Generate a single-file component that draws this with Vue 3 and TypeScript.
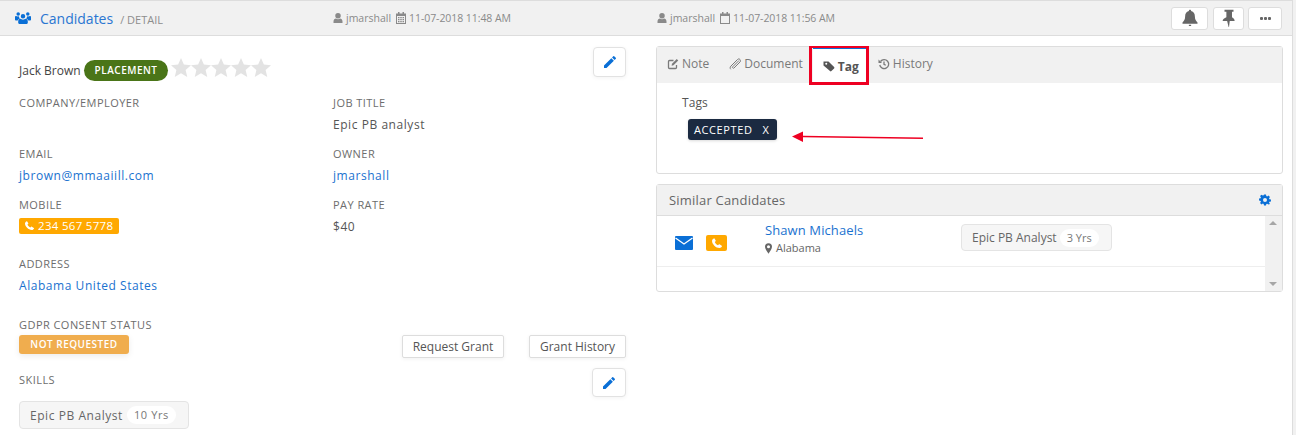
<script setup lang="ts">
interface Field { label: string; value?: string; kind?: string }
const leftFields: Field[][] = [
  [{ label: 'COMPANY/EMPLOYER' }, { label: 'JOB TITLE', value: 'Epic PB analyst' }],
  [{ label: 'EMAIL', value: 'jbrown@mmaaiill.com', kind: 'link' }, { label: 'OWNER', value: 'jmarshall', kind: 'link' }],
]
const stars = [1, 2, 3, 4, 5]
const pencil = 'M3 17.2V21h3.8L17.8 10 14 6.2 3 17.2zM20.7 7.1a1 1 0 0 0 0-1.4l-2.4-2.4a1 1 0 0 0-1.4 0l-1.8 1.8 3.8 3.8 1.8-1.8z'
const phone = 'M6.6 2.5 9.4 7c.3.5.2 1-.2 1.4L7.6 10c.9 2.6 3.8 5.5 6.4 6.4l1.6-1.6c.4-.4.9-.5 1.4-.2l4.500 2.800c.5.3.6.800.4 1.300-.8 2-2.700 3.300-4.800 3.300C9.700 21.900 2.100 14.300 2.100 7.900c0-2.100 1.300-4 3.300-4.800.5-.2.900-.9 1.200-.6z'
const user = 'M12 2a5.500 5.500 0 1 1 0 11 5.500 5.500 0 0 1 0-11zM3 22v-3c0-3.500 2.500-6 5-6 1 .8 2.500 1.300 4 1.300s3-.5 4-1.300c2.500 0 5 2.500 5 6v3z'
</script>

<template>
  <div class="page">
    <header class="topbar">
      <div class="title">
        <svg class="ic-users" viewBox="0 0 30 24"><path d="M15 5.500a4.200 4.200 0 1 1 0 8.400 4.200 4.200 0 0 1 0-8.400zM6 2a3.300 3.300 0 1 1 0 6.600A3.300 3.300 0 0 1 6 2zM24 2a3.300 3.300 0 1 1 0 6.600A3.300 3.300 0 0 1 24 2zM0 11c0-1.500 1-2 2-2 1 .8 2.500 1.200 5 .8.200 1.800 1 3.200 2.300 4.200-2 .5-3.600 2-4.300 3.500H2c-1 0-2-.5-2-1.500zM30 11c0-1.500-1-2-2-2-1 .8-2.500 1.200-5 .8-.2 1.800-1 3.200-2.300 4.200 2 .5 3.600 2 4.300 3.500h3c1 0 2-.5 2-1.500zM10 14.500c1.300 1 3 1.500 5 1.500s3.700-.5 5-1.500c2.500 0 4 2 4 5V22c0 1-1 2-2 2H8c-1 0-2-1-2-2v-2.500c0-3 1.500-5 4-5z" /></svg>
        <span class="title-main">Candidates</span>
        <span class="title-sub">/ DETAIL</span>
      </div>
      <div class="stamp stamp-a">
        <svg class="ic-meta" viewBox="0 0 24 24"><path :d="user" /></svg>
        <span>jmarshall</span>
        <svg class="ic-meta ic-cal" viewBox="0 0 24 24"><path fill-rule="evenodd" d="M6 0h3v3h6V0h3v3h4v21H2V3h4zM4 8v14h16V8zM6 10h3v2.500H6zM10.500 10h3v2.500h-3zM15 10h3v2.500h-3zM6 14h3v2.500H6zM10.500 14h3v2.500h-3zM15 14h3v2.500h-3zM6 18h3v2.500H6zM10.500 18h3v2.500h-3zM15 18h3v2.500h-3z" /></svg>
        <span class="date">11-07-2018 11:48 AM</span>
      </div>
      <div class="stamp stamp-b">
        <svg class="ic-meta" viewBox="0 0 24 24"><path :d="user" /></svg>
        <span>jmarshall</span>
        <svg class="ic-meta ic-cal" viewBox="0 0 24 24"><path fill-rule="evenodd" d="M6 0h3v3h6V0h3v3h4v21H2V3h4zM4 8v14h16V8z" /></svg>
        <span class="date">11-07-2018 11:56 AM</span>
      </div>
      <div class="top-actions">
        <button class="tbtn tbtn-bell"><svg viewBox="0 0 24 24"><path d="M12 1c1 0 1.500.7 1.500 1.500C17 3.200 18.500 6 18.500 10c0 4 1.500 6 3.500 8v1.500H2V18c2-2 3.500-4 3.500-8 0-4 1.500-6.800 5-7.500C10.500 1.700 11 1 12 1zM10.500 21h3v1.500h-3z" /></svg></button>
        <button class="tbtn tbtn-pin"><svg viewBox="0 0 24 24"><path d="M6 1h12v2.500h-2V11c2 1 3.500 2.500 3.500 5h-6.500l-1 8h-.5l-2-8H3.500c0-2.500 2.500-4 5-5V3.500H6z" /></svg></button>
        <button class="tbtn tbtn-more"><i></i><i></i><i></i></button>
      </div>
    </header>

    <main class="body">
      <section class="left">
        <div class="name-row">
          <span class="name">Jack Brown</span>
          <span class="pill">PLACEMENT</span>
          <span class="stars">
            <svg v-for="s in stars" :key="s" viewBox="0.5 1 23 23"><path d="M12 1l3.300 7.600 8.200.8-6.200 5.400 1.900 8.100-7.200-4.300-7.200 4.300 1.900-8.100L.5 9.400l8.200-.8z" /></svg>
          </span>
          <button class="edit edit-top"><svg viewBox="0 0 24 24"><path :d="pencil" /></svg></button>
        </div>

        <div v-for="(row, i) in leftFields" :key="i" class="row row-51">
          <div v-for="f in row" :key="f.label" class="field">
            <div class="label">{{ f.label }}</div>
            <div v-if="f.value" class="value" :class="{ link: f.kind === 'link' }">{{ f.value }}</div>
          </div>
        </div>

        <div class="row row-59">
          <div class="field">
            <div class="label">MOBILE</div>
            <div class="value"><span class="phone-tag"><svg viewBox="0 0 24 24"><path :d="phone" /></svg>234 567 5778</span></div>
          </div>
          <div class="field">
            <div class="label">PAY RATE</div>
            <div class="value">$40</div>
          </div>
        </div>

        <div class="row row-55">
          <div class="field">
            <div class="label">ADDRESS</div>
            <div class="value link">Alabama United States</div>
          </div>
        </div>

        <div class="gdpr">
          <div>
            <div class="label">GDPR CONSENT STATUS</div>
            <span class="gdpr-tag">NOT REQUESTED</span>
          </div>
          <div class="gdpr-btns">
            <button class="plain">Request Grant</button>
            <button class="plain">Grant History</button>
          </div>
        </div>

        <div class="skills">
          <div class="skills-main">
            <div class="label">SKILLS</div>
            <div class="chip chip-left">Epic PB Analyst<span class="yrs">10 Yrs</span></div>
          </div>
          <button class="edit"><svg viewBox="0 0 24 24"><path :d="pencil" /></svg></button>
        </div>
      </section>

      <section class="right">
        <div class="panel tabs-panel">
          <nav class="tabs">
            <span class="tab">
              <svg viewBox="0 0 24 24"><path fill="none" stroke="currentColor" stroke-width="2.600" d="M19 14v5a2 2 0 0 1-2 2H5a2 2 0 0 1-2-2V7a2 2 0 0 1 2-2h8" /><path d="M10 11.500 19.500 2l3 3-9.500 9.500-3.800.8z" /></svg>
              Note
            </span>
            <span class="tab">
              <svg viewBox="0 0 24 24"><path fill="none" stroke="currentColor" stroke-width="2" d="M20 5 7.500 17.500c-1 1-.5 2 0 2.500s1.500 1 2.500 0L22 8c2-2 1-4 0-5s-3-2-5 0L4 16c-2.500 2.500-2 5-.5 6.500" /></svg>
              Document
            </span>
            <span class="tab tab-active">
              <svg viewBox="0 0 24 24"><path fill-rule="evenodd" d="M1 3h10l11.200 11a2 2 0 0 1 0 2.800L16.800 22.200a2 2 0 0 1-2.800 0L1 11V3zM6.500 5.500a2 2 0 1 0 0 4 2 2 0 0 0 0-4z" /></svg>
              Tag
            </span>
            <span class="tab">
              <svg viewBox="0 0 24 24"><path fill="none" stroke="currentColor" stroke-width="2.600" d="M5 7a9 9 0 1 1-1.500 7M12 7v5.500l3.500 2" /><path d="M1 3v7h7z" /></svg>
              History
            </span>
          </nav>
          <div class="tag-body">
            <div class="tags-label">Tags</div>
            <span class="dark-tag">ACCEPTED<b>X</b></span>
          </div>
          <span class="tab-mark"></span>
          <svg class="arrow" viewBox="0 0 135 16"><path d="M12 7.500 132 9.200" stroke="#ee0022" stroke-width="1.500" fill="none" /><path d="M1 7.500 12 2.500v10.500z" fill="#ee0022" /></svg>
        </div>

        <div class="panel similar">
          <div class="panel-head">
            <span>Similar Candidates</span>
            <svg class="cog" viewBox="0 0 24 24"><path fill-rule="evenodd" d="M10 1h4l.6 3.100 1.700.7L19 3l2.900 2.900-1.800 2.700.7 1.700 3.100.6v4l-3.100.6-.7 1.700 1.800 2.700L19 21.100l-2.700-1.800-1.700.7L14 23h-4l-.6-3.100-1.700-.7L5 21.100 2.100 18.200l1.800-2.700-.7-1.700L.1 13.200v-4l3.100-.6.7-1.700L2.100 4.200 5 1.300l2.700 1.800 1.700-.7zM12 8a4 4 0 1 0 0 8 4 4 0 0 0 0-8z" /></svg>
          </div>
          <div class="sim-body">
            <div class="sim-list">
              <div class="sim-row">
                <div class="sim-icons">
                  <svg class="mail" viewBox="0 0 18 14"><rect width="18" height="14" rx="1" fill="#0a6fd6" /><path d="M.5 2 9 8l8.500-6" fill="none" stroke="#fff" stroke-width="1.300" /></svg>
                  <span class="call"><svg viewBox="0 0 24 24"><path :d="phone" /></svg></span>
                </div>
                <div class="sim-who">
                  <a class="sim-name">Shawn Michaels</a>
                  <div class="sim-place"><svg viewBox="0 0 16 24"><path fill-rule="evenodd" d="M8 0a8 8 0 0 1 8 8c0 4-4 10-8 16C4 18 0 12 0 8a8 8 0 0 1 8-8zm0 4.500a3.500 3.500 0 1 0 0 7 3.500 3.500 0 0 0 0-7z" /></svg>Alabama</div>
                </div>
                <div class="chip chip-sim">Epic PB Analyst<span class="yrs">3 Yrs</span></div>
              </div>
            </div>
            <div class="scrollbar"><i class="up"></i><i class="down"></i></div>
          </div>
        </div>
      </section>
    </main>
  </div>
</template>

<style>
html, body { margin: 0; background: #fff; }
</style>

<style scoped>
.page {
  width: 1296px; height: 435px; overflow: hidden; position: relative;
  font-family: "Open Sans", sans-serif; font-size: 12px; color: #555; background: #fff;
  border-right: 3px solid #f1f1f1; box-sizing: border-box;
}
svg { fill: currentColor; display: block; flex: none; }
button { font-family: inherit; background: #fff; cursor: pointer; padding: 0; }

.topbar {
  height: 36px; box-sizing: border-box; background: #f1f1f1;
  border-top: 1px solid #ddd; border-bottom: 1px solid #ddd; border-right: 1px solid #ddd;
  display: flex; align-items: center;
}
.title { width: 332px; display: flex; align-items: center; padding-left: 15px; box-sizing: border-box; }
.ic-users { width: 16px; height: 15px; color: #0a6fd6; margin-right: 9px; margin-top: -1px; }
.title-main { font-size: 14px; color: #2a76d2; margin-right: 7px; }
.title-sub { font-size: 11px; color: #8d8d8d; margin-top: 3px; }
.stamp { display: flex; align-items: center; gap: 2px; font-size: 10.500px; color: #8a8a8a; }
.stamp-a { width: 324px; }
.stamp-b { width: 515px; }
.ic-meta { width: 12px; height: 12px; }
.ic-cal { margin-left: 2px; }
.date { letter-spacing: -.07px; }
.top-actions { display: flex; align-items: center; gap: 4px; }
.tbtn {
  height: 23px; border: 1px solid #ddd; border-radius: 3px; color: #666;
  display: flex; align-items: center; justify-content: center; gap: 1px; box-sizing: border-box;
}
.tbtn svg { width: 18px; height: 18px; }
.tbtn-bell { width: 37px; margin-right: 1px; }
.tbtn-pin { width: 31px; }
.tbtn-more { width: 34px; }
.tbtn-more i { width: 3px; height: 3px; background: #666; border-radius: 1px; }

.body { display: flex; height: 399px; border-right: 1px solid #ddd; }
.left { width: 656px; box-sizing: border-box; padding: 9px 30px 0 19px; letter-spacing: .55px; }
.name-row { height: 48px; display: flex; align-items: center; }
.name { color: #444; margin-right: 3px; letter-spacing: 0; padding-top: 2px; }
.pill {
  height: 21px; line-height: 21px; padding: 0 11px; border-radius: 11px; background: #4a7518; margin-top: 2px;
  color: #fff; font-size: 10px; font-weight: 600; letter-spacing: .5px;
}
.stars { display: flex; color: #e3e3e3; margin: -2px 0 0 3px; }
.stars svg { width: 20px; height: 20px; }
.edit {
  width: 33px; height: 30px; border: 1px solid #e2e2e2; border-radius: 4px; color: #0a6fd6;
  display: flex; align-items: center; justify-content: center; box-shadow: 0 1px 4px rgba(0,0,0,.05);
}
.edit svg { width: 16px; height: 16px; }
.edit-top { margin-left: auto; position: relative; top: -7px; }

.row { display: grid; grid-template-columns: 314px 1fr; }
.row-51 { height: 51px; }
.row-59 { height: 59px; }
.row-55 { height: 55px; }
.label { color: #6d6d6d; font-size: 11px; line-height: 20px; letter-spacing: .45px; }
.value { line-height: 22px; color: #555; padding-top: 1px; }
.link { color: #1a72cf; }
.phone-tag {
  display: inline-flex; align-items: center; height: 16px; padding: 0 6px 0 5px; border-radius: 2px;
  background: #ffa800; color: #fff; gap: 3px; line-height: 16px; font-size: 11.500px; letter-spacing: .3px;
}
.phone-tag svg { width: 11px; height: 11px; }

.gdpr { display: flex; justify-content: space-between; align-items: flex-end; height: 45px; }
.gdpr-tag {
  display: block; width: 110px; height: 19px; line-height: 19px; text-align: center; border-radius: 3px;
  background: #f0ad4e; color: #fff; font-size: 10px; font-weight: 600; letter-spacing: .5px;
  box-shadow: 0 2px 6px rgba(0,0,0,.08);
}
.gdpr-btns { display: flex; gap: 25px; margin-bottom: -4px; }
.plain {
  height: 23px; width: 102px; padding: 0; border: 1px solid #ddd; border-radius: 2px;
  font-size: 12px; color: #555; box-shadow: 0 1px 4px rgba(0,0,0,.06);
}
.plain + .plain { width: 97px; }
.skills { display: flex; justify-content: space-between; align-items: flex-start; margin-top: 1px; }
.skills-main .label { margin-top: 15px; margin-bottom: 11px; }
.skills > .edit { margin-top: 13px; height: 29px; width: 34px; }
.chip {
  display: inline-flex; align-items: center; height: 28px; box-sizing: border-box; padding: 0 5px 0 10px;
  border: 1px solid #e4e4e4; border-radius: 4px; background: #f6f6f6; color: #666; letter-spacing: .55px;
}
.chip-left { width: 170px; }
.chip-sim { width: 151px; height: 27px; letter-spacing: 0; }
.yrs {
  background: #fff; border-radius: 9px; padding: 0 7px; margin-left: 4px; height: 18px; line-height: 18px;
  font-size: 11px; color: #777; letter-spacing: .6px;
}
.chip-sim .yrs { letter-spacing: 0; margin-left: 3px; }

.right { width: 627px; padding-top: 10px; }
.panel { border: 1px solid #ddd; border-radius: 3px; background: #fff; position: relative; }
.tabs-panel { height: 128px; box-sizing: border-box; }
.tabs { height: 36px; background: #f1f1f1; display: flex; align-items: stretch; padding-left: 10px; }
.tab {
  display: flex; align-items: center; gap: 3px; margin-right: 20px; color: #7a7a7a; font-size: 12px; padding-bottom: 3px;
}
.tab svg { width: 12px; height: 12px; }
.tab-active {
  background: #fff; color: #555; font-weight: 700; border-top: 2px solid #0a6fd6; padding: 0 9px 0 10px;
  margin: 0 10px 0 -10px;
}
.tag-body { padding: 10px 0 0 25px; }
.tags-label { line-height: 20px; color: #555; letter-spacing: .1px; }
.dark-tag {
  display: inline-flex; align-items: center; margin: 6px 0 0 6px; height: 21px; padding: 0 8px 0 6px; border-radius: 3px;
  background: #1b2a41; color: #fff; font-size: 11px; font-weight: 500; letter-spacing: .6px; box-shadow: 0 1px 3px rgba(0,0,0,.15);
}
.dark-tag b { font-weight: 500; margin-left: 10px; }
.tab-mark {
  position: absolute; left: 152px; top: -1px; width: 60px; height: 39px; box-sizing: border-box;
  border: 3px solid #ee0022; border-top-width: 2px;
}
.arrow { position: absolute; left: 134px; top: 82px; width: 135px; height: 16px; }

.similar { margin-top: 10px; height: 108px; box-sizing: border-box; }
.panel-head {
  height: 31px; box-sizing: border-box; background: #f1f1f1; border-bottom: 1px solid #ddd; display: flex; align-items: center;
  justify-content: space-between; padding: 0 12px; font-size: 13px; color: #666; letter-spacing: .2px;
}
.cog { width: 12px; height: 12px; color: #0a6fd6; margin-right: -1px; }
.sim-body { display: flex; height: 75px; }
.sim-list { flex: 1; }
.sim-row { height: 51px; box-sizing: border-box; border-bottom: 1px solid #eee; display: flex; align-items: flex-start; }
.sim-icons { width: 108px; display: flex; align-items: center; gap: 13px; padding: 19px 0 0 18px; box-sizing: border-box; }
.mail { width: 18px; height: 14px; }
.call { width: 21px; height: 16px; background: #ffa800; border-radius: 2px; color: #fff; display: flex; align-items: center; justify-content: center; }
.call svg { width: 12px; height: 12px; }
.sim-who { width: 196px; }
.sim-name { display: block; font-size: 13px; color: #1a72cf; line-height: 18px; margin-top: 5px; letter-spacing: .1px; }
.sim-place { display: flex; align-items: center; gap: 4px; font-size: 11px; color: #666; line-height: 18px; }
.sim-place svg { width: 7px; height: 11px; }
.chip-sim { margin-top: 8px; }
.scrollbar { width: 17px; background: #f1f1f1; position: relative; }
.scrollbar i { position: absolute; left: 4px; width: 0; height: 0; border-left: 4px solid transparent; border-right: 4px solid transparent; }
.up { top: 5px; border-bottom: 4px solid #a6a6a6; }
.down { bottom: 5px; border-top: 4px solid #a6a6a6; }
</style>
